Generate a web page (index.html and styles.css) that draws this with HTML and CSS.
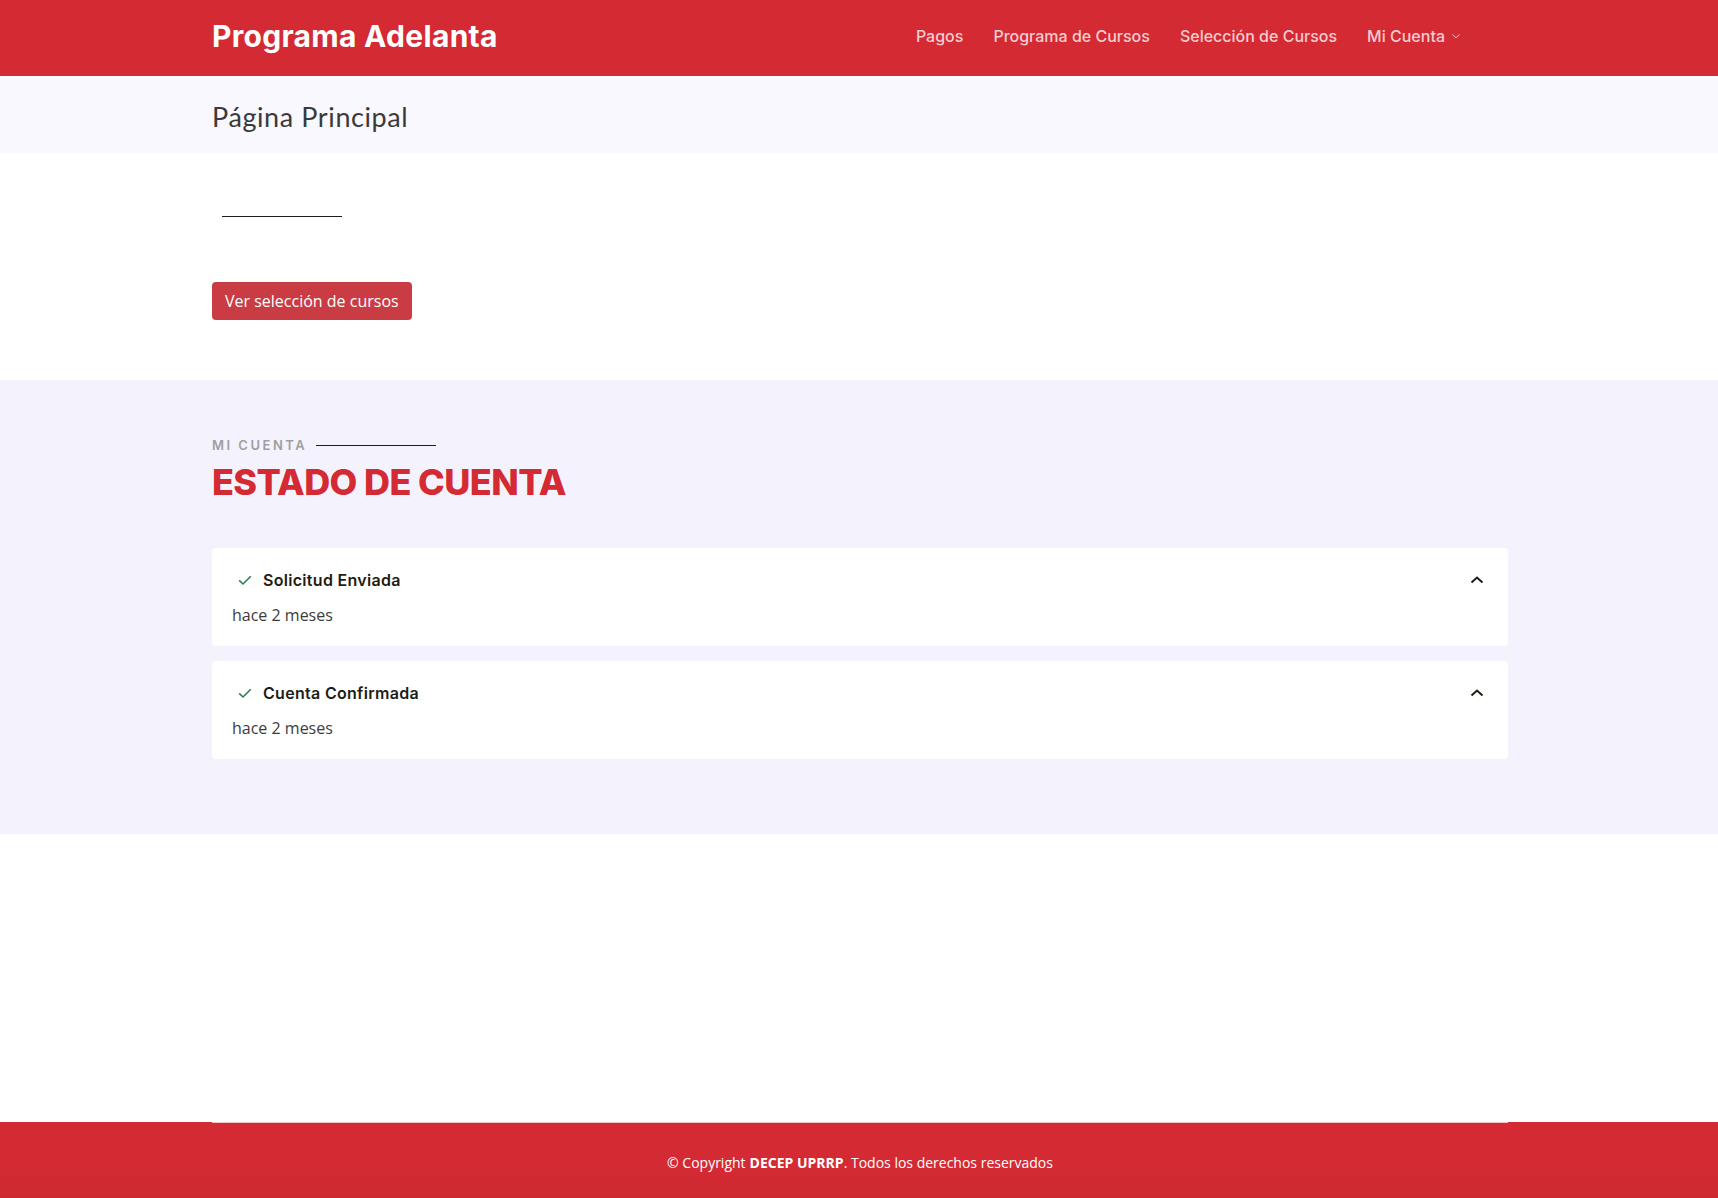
FILE: index.html
```html
<!DOCTYPE html>
<html lang="es">
<head>
<meta charset="utf-8">
<title>Programa Adelanta</title>
<link rel="stylesheet" href="styles.css">
</head>
<body>
<header class="topbar">
  <div class="container topbar-inner">
    <a class="logo" href="#">Programa Adelanta</a>
    <nav class="nav">
      <a href="#">Pagos</a>
      <a href="#">Programa de Cursos</a>
      <a href="#">Selección de Cursos</a>
      <a href="#" class="dropdown">Mi Cuenta
        <svg width="8" height="6" viewBox="0 0 8 6"><path d="M0.5 1.5 L4 4.8 L7.5 1.5" fill="none" stroke="currentColor" stroke-width="1"/></svg>
      </a>
    </nav>
  </div>
</header>

<main class="main">
  <section class="breadcrumbs">
    <div class="container">
      <h1 class="page-title">Página Principal</h1>
    </div>
  </section>

  <section class="intro">
    <div class="container">
      <div class="empty-title"><span class="line"></span></div>
      <a class="btn-danger" href="#">Ver selección de cursos</a>
    </div>
  </section>

  <section class="account">
    <div class="container">
      <div class="kicker">MI CUENTA <span class="line"></span></div>
      <h2 class="account-title">ESTADO DE CUENTA</h2>
      <div class="items">
        <div class="item">
          <div class="item-head">
            <svg class="check" width="16" height="16" viewBox="0 0 16 16"><path d="M2.2 8.4 L6 12 L13.8 4.3" fill="none" stroke="currentColor" stroke-width="1.6"/></svg>
            <span class="item-title">Solicitud Enviada</span>
            <svg class="chev" width="14" height="10" viewBox="0 0 14 10"><path d="M1.5 7.5 L7 2.5 L12.5 7.5" fill="none" stroke="currentColor" stroke-width="2"/></svg>
          </div>
          <p class="item-body">hace 2 meses</p>
        </div>
        <div class="item">
          <div class="item-head">
            <svg class="check" width="16" height="16" viewBox="0 0 16 16"><path d="M2.2 8.4 L6 12 L13.8 4.3" fill="none" stroke="currentColor" stroke-width="1.6"/></svg>
            <span class="item-title">Cuenta Confirmada</span>
            <svg class="chev" width="14" height="10" viewBox="0 0 14 10"><path d="M1.5 7.5 L7 2.5 L12.5 7.5" fill="none" stroke="currentColor" stroke-width="2"/></svg>
          </div>
          <p class="item-body">hace 2 meses</p>
        </div>
      </div>
    </div>
  </section>
</main>

<footer class="footer">
  <div class="container footer-inner">
    © Copyright <strong>DECEP UPRRP</strong>. Todos los derechos reservados
  </div>
</footer>
</body>
</html>
```

FILE: styles.css
```css
* { box-sizing: border-box; }
html, body { margin: 0; padding: 0; }
body {
  font-family: "Open Sans", "Liberation Sans", sans-serif;
  color: #444;
  background: #fff;
  min-height: 100vh;
  display: flex;
  flex-direction: column;
}
a { text-decoration: none; }

.container {
  width: 1296px;
  margin: 0 auto;
  position: relative;
  left: 1px;
}

/* Header */
.topbar {
  background: #d42a33;
  height: 76px;
}
.topbar-inner {
  height: 76px;
  display: flex;
  align-items: center;
  justify-content: space-between;
}
.logo {
  font-family: "Inter", "Liberation Sans", sans-serif;
  font-weight: 700;
  font-size: 30px;
  color: #fff;
  letter-spacing: 0.3px;
  margin-top: -4px;
}
.nav {
  display: flex;
  align-items: center;
  gap: 30px;
  margin-right: 48px;
  margin-top: -4px;
}
.nav a {
  font-family: "Inter", "Liberation Sans", sans-serif;
  font-weight: 500;
  font-size: 16px;
  color: #f6cdd0;
  display: flex;
  align-items: center;
  gap: 7px;
}

/* Breadcrumbs */
.breadcrumbs {
  background: #f8f8fe;
  height: 77px;
  display: flex;
  align-items: center;
}
.page-title {
  font-family: "Lato", "Liberation Sans", sans-serif;
  font-weight: 400;
  font-size: 27px;
  color: #3a3a3a;
  margin: 4px 0 0;
  letter-spacing: 0.6px;
}

/* Intro */
.intro {
  padding: 63px 0 60px;
}
.empty-title {
  height: 1px;
  margin-bottom: 65px;
}
.empty-title .line {
  display: block;
  width: 120px;
  height: 1px;
  background: #1d1d1d;
  margin-left: 10px;
}
.btn-danger {
  display: inline-block;
  background: #c93c43;
  color: #fff;
  font-size: 16px;
  line-height: 24px;
  padding: 7px 13px;
  border-radius: 4px;
}

/* Account section */
.account {
  background: #f4f3fd;
  padding: 57px 0 75px;
}
.kicker {
  font-family: "Inter", "Liberation Sans", sans-serif;
  font-weight: 600;
  font-size: 13px;
  letter-spacing: 2.5px;
  color: #9f9f9f;
  display: flex;
  align-items: center;
  line-height: 16px;
}
.kicker .line {
  display: inline-block;
  width: 120px;
  height: 1px;
  background: #1d1d1d;
  margin-left: 9px;
}
.account-title {
  font-family: "Inter", "Liberation Sans", sans-serif;
  font-weight: 800;
  font-size: 36px;
  color: #d42a33;
  margin: 7px 0 0;
  line-height: 44px;
  letter-spacing: -0.6px;
}
.items {
  margin-top: 44px;
  display: flex;
  flex-direction: column;
  gap: 15px;
}
.item {
  background: #fff;
  border-radius: 4px;
  height: 98px;
  padding: 21px 20px 0 20px;
}
.item-head {
  display: flex;
  align-items: center;
  height: 22px;
}
.check {
  color: #2d7d55;
  margin-left: 5px;
  margin-right: 10px;
}
.item-title {
  font-family: "Inter", "Liberation Sans", sans-serif;
  font-weight: 600;
  font-size: 16px;
  color: #1f1c14;
  letter-spacing: 0.3px;
  flex: 1;
}
.chev {
  color: #1f1c14;
  margin-right: 4px;
}
.item-body {
  margin: 12px 0 0;
  font-size: 16px;
  line-height: 24px;
  color: #3c3c3c;
}

.main { flex: 1; }

/* Footer */
.footer {
  background: #d42a33;
  background-image: linear-gradient(to bottom, #d42a33 60%, #cd2830);
  height: 76px;
  color: #fff;
}
.footer-inner {
  border-top: 1px solid #f3c3c6;
  height: 76px;
  display: flex;
  align-items: center;
  justify-content: center;
  font-size: 14px;
  padding-top: 4px;
}
.footer-inner strong { font-weight: 700; margin: 0 0 0 4px; }
```
